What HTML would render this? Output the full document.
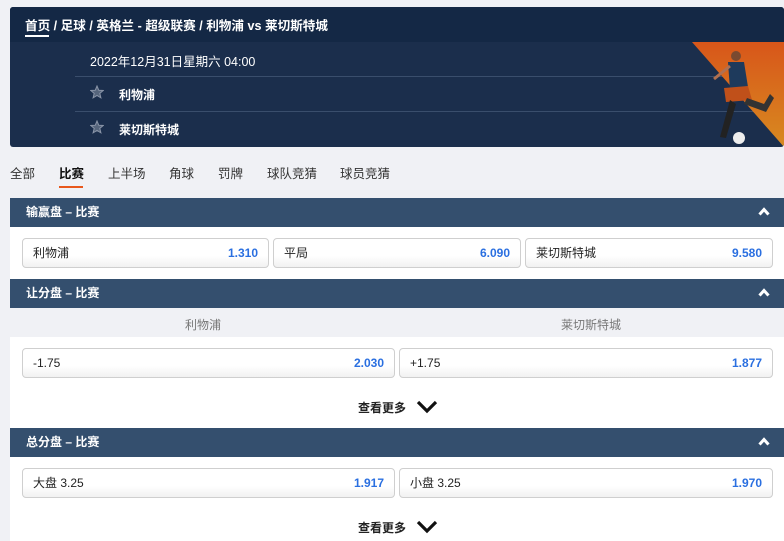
<!DOCTYPE html>
<html><head><meta charset="utf-8"><style>
*{margin:0;padding:0;box-sizing:border-box}
body{width:784px;height:541px;overflow:hidden;background:#f0f1f5;font-family:"Liberation Sans","Noto Sans CJK SC",sans-serif;position:relative;font-size:12px}
.a{position:absolute}
.hdr{left:10px;width:774px;height:29px;background:#344f6e;color:#fff;font-weight:bold;font-size:12px;line-height:29px;padding-left:16px}
.hdr svg{position:absolute;right:14px;top:9px}
.btn{position:absolute;height:30px;background:linear-gradient(#fff 60%,#f1f1f1);border:1px solid #cfcfcf;border-radius:4px;font-size:12px;line-height:28px;padding:0 10px;color:#222}
.btn b{position:absolute;right:10px;color:#2a6fe0;font-weight:bold}
.white{left:10px;width:774px;background:#fff}
.more{font-size:12px;font-weight:bold;color:#222}
</style></head><body>
<div class="a" style="left:10px;top:7px;width:774px;height:140px;background:#1b2e4c;border-radius:3px;overflow:hidden">
 <div class="a" style="left:0;top:0;width:774px;height:35px;background:#142845"></div>
 <div class="a" style="left:15px;top:8px;color:#fff;font-weight:bold;font-size:12.6px">首页 / 足球 / 英格兰 - 超级联赛 / 利物浦 vs 莱切斯特城</div>
 <div class="a" style="left:15px;top:28px;width:24px;height:2px;background:#fff"></div>
 <div class="a" style="left:80px;top:44px;color:#fff;font-size:12.5px">2022年12月31日星期六 04:00</div>
 <div class="a" style="left:65px;top:69px;width:700px;height:1px;background:#3a4e6c"></div>
 <div class="a" style="left:65px;top:104px;width:700px;height:1px;background:#3a4e6c"></div>
 <svg class="a" style="left:80px;top:78px" width="14" height="14"><polygon points="7,1 8.8,5.3 13.2,5.5 9.8,8.4 10.9,12.8 7,10.4 3.1,12.8 4.2,8.4 0.8,5.5 5.2,5.3" fill="#56657c" stroke="#8a95a8" stroke-width="1"/></svg>
 <div class="a" style="left:109px;top:79px;color:#fff;font-weight:bold">利物浦</div>
 <svg class="a" style="left:80px;top:113px" width="14" height="14"><polygon points="7,1 8.8,5.3 13.2,5.5 9.8,8.4 10.9,12.8 7,10.4 3.1,12.8 4.2,8.4 0.8,5.5 5.2,5.3" fill="#56657c" stroke="#8a95a8" stroke-width="1"/></svg>
 <div class="a" style="left:109px;top:114px;color:#fff;font-weight:bold">莱切斯特城</div>
 <svg class="a" style="left:682px;top:35px" width="92" height="105"><defs><linearGradient id="g" x1="0" y1="0" x2="0" y2="1"><stop offset="0" stop-color="#d8561a"/><stop offset="1" stop-color="#d88a20"/></linearGradient></defs><polygon points="0,0 92,0 92,105" fill="url(#g)"/>
 <circle cx="44" cy="14" r="5" fill="#7a4a30"/><path d="M36 20 L52 20 L56 45 L38 48 Z" fill="#1e3a5c"/><path d="M32 46 L56 44 L60 58 L34 60Z" fill="#c0501a"/><path d="M38 58 L28 95 L34 96 L44 62Z" fill="#222"/><path d="M55 56 L72 62 L78 52 L82 56 L74 70 L52 62Z" fill="#333"/><path d="M38 24 L22 37" stroke="#b07050" stroke-width="3"/><circle cx="47" cy="96" r="6" fill="#eee"/></svg>
</div>
<div class="a" style="left:10px;top:163px;color:#333;font-size:12.5px">全部</div>
<div class="a" style="left:59px;top:163px;color:#111;font-size:12.5px;font-weight:bold">比赛</div>
<div class="a" style="left:59px;top:186px;width:24px;height:2px;background:#e8581c"></div>
<div class="a" style="left:108px;top:163px;color:#333;font-size:12.5px">上半场</div>
<div class="a" style="left:169px;top:163px;color:#333;font-size:12.5px">角球</div>
<div class="a" style="left:218px;top:163px;color:#333;font-size:12.5px">罚牌</div>
<div class="a" style="left:267px;top:163px;color:#333;font-size:12.5px">球队竞猜</div>
<div class="a" style="left:340px;top:163px;color:#333;font-size:12.5px">球员竞猜</div>

<div class="a hdr" style="top:198px">输赢盘 – 比赛<svg width="12" height="9"><path d="M1.5 7.5 L6 2.5 L10.5 7.5" stroke="#fff" stroke-width="3" fill="none"/></svg></div>
<div class="a white" style="top:227px;height:52px"></div>
<div class="btn" style="left:22px;top:238px;width:247px">利物浦<b>1.310</b></div>
<div class="btn" style="left:273px;top:238px;width:248px">平局<b>6.090</b></div>
<div class="btn" style="left:525px;top:238px;width:248px">莱切斯特城<b>9.580</b></div>

<div class="a hdr" style="top:279px">让分盘 – 比赛<svg width="12" height="9"><path d="M1.5 7.5 L6 2.5 L10.5 7.5" stroke="#fff" stroke-width="3" fill="none"/></svg></div>
<div class="a" style="left:185px;top:316px;color:#777">利物浦</div>
<div class="a" style="left:561px;top:316px;color:#777">莱切斯特城</div>
<div class="a white" style="top:337px;height:91px"></div>
<div class="btn" style="left:22px;top:348px;width:373px">-1.75<b>2.030</b></div>
<div class="btn" style="left:399px;top:348px;width:374px">+1.75<b>1.877</b></div>
<div class="a more" style="left:358px;top:399px">查看更多</div>
<svg class="a" style="left:416px;top:400px" width="22" height="14"><path d="M2 2 L11 11 L20 2" stroke="#111" stroke-width="3.2" fill="none"/></svg>

<div class="a hdr" style="top:428px">总分盘 – 比赛<svg width="12" height="9"><path d="M1.5 7.5 L6 2.5 L10.5 7.5" stroke="#fff" stroke-width="3" fill="none"/></svg></div>
<div class="a white" style="top:457px;height:84px"></div>
<div class="btn" style="left:22px;top:468px;width:373px">大盘 3.25<b>1.917</b></div>
<div class="btn" style="left:399px;top:468px;width:374px">小盘 3.25<b>1.970</b></div>
<div class="a more" style="left:358px;top:519px">查看更多</div>
<svg class="a" style="left:416px;top:520px" width="22" height="14"><path d="M2 2 L11 11 L20 2" stroke="#111" stroke-width="3.2" fill="none"/></svg>
</body></html>
